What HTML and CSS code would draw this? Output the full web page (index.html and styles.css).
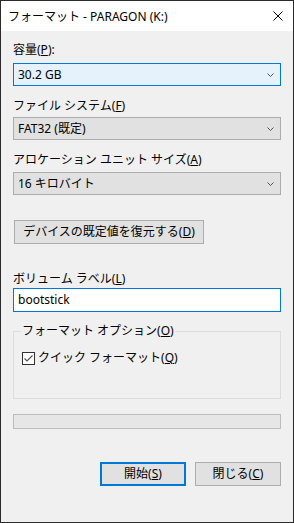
FILE: index.html
```html
<!DOCTYPE html>
<html lang="ja">
<head>
  <meta charset="UTF-8" />
  <title>フォーマット - PARAGON (K:)</title>
  <link rel="stylesheet" href="styles.css">
</head>
<body>
  <div class="window">
    <!-- Title bar -->
    <div class="titlebar">
      <span class="title">フォーマット - PARAGON (K:)</span>
      <svg class="close" width="10" height="10" viewBox="0 0 10 10">
        <path d="M0.5 0.5 L9.5 9.5 M9.5 0.5 L0.5 9.5" stroke="#000" stroke-width="1" fill="none" />
      </svg>
    </div>

    <div class="content">
      <div class="label l-capacity">容量(<u>P</u>):</div>
      <div class="combo focused c-capacity">
        <span>30.2 GB</span>
        <svg class="chev" width="7" height="4" viewBox="0 0 7 4"><path d="M0.5 0.5 L3.5 3.5 L6.5 0.5" stroke="#555" fill="none" /></svg>
      </div>

      <div class="label l-fs">ファイル システム(<u>F</u>)</div>
      <div class="combo c-fs">
        <span>FAT32 (既定)</span>
        <svg class="chev" width="7" height="4" viewBox="0 0 7 4"><path d="M0.5 0.5 L3.5 3.5 L6.5 0.5" stroke="#555" fill="none" /></svg>
      </div>

      <div class="label l-alloc">アロケーション ユニット サイズ(<u>A</u>)</div>
      <div class="combo c-alloc">
        <span>16 キロバイト</span>
        <svg class="chev" width="7" height="4" viewBox="0 0 7 4"><path d="M0.5 0.5 L3.5 3.5 L6.5 0.5" stroke="#555" fill="none" /></svg>
      </div>

      <button class="btn restore">デバイスの既定値を復元する(<u>D</u>)</button>

      <div class="label l-vol">ボリューム ラベル(<u>L</u>)</div>
      <div class="textbox">bootstick</div>

      <fieldset class="group">
        <legend>フォーマット オプション(<u>O</u>)</legend>
        <div class="check-row">
          <span class="checkbox">
            <svg width="11" height="11" viewBox="0 0 11 11"><path d="M1.5 5.5 L4 8 L9.5 2.5" stroke="#555" stroke-width="1.2" fill="none" /></svg>
          </span>
          <span>クイック フォーマット(<u>Q</u>)</span>
        </div>
      </fieldset>

      <div class="progress"></div>

      <div class="actions">
        <button class="btn default">開始(<u>S</u>)</button>
        <button class="btn">閉じる(<u>C</u>)</button>
      </div>
    </div>
  </div>
</body>
</html>
```

FILE: styles.css
```css
body {
  margin: 0;
  font-family: "Noto Sans", "Noto Sans CJK JP", sans-serif;
  font-size: 12px;
  color: #000;
  background: #f0f0f0;
}

u {
  text-decoration: underline;
  text-decoration-thickness: 1px;
  text-underline-offset: 1px;
}

.window {
  width: 294px;
  height: 523px;
  box-sizing: border-box;
  border: 1px solid #2b2b2b;
  background: #f0f0f0;
  display: flex;
  flex-direction: column;
}

.titlebar {
  height: 30px;
  background: #fff;
  display: flex;
  align-items: center;
  justify-content: space-between;
  padding: 0 10px 0 7px;
  flex-shrink: 0;
}

.title {
  line-height: 16px;
  margin-top: 1px;
}

.close {
  margin-top: -1px;
}

.content {
  padding: 0 12px;
  display: flex;
  flex-direction: column;
}

.label {
  line-height: 16px;
  height: 16px;
}

.l-capacity { margin-top: 11px; }
.l-fs { margin-top: 12px; }
.l-alloc { margin-top: 12px; }
.l-vol { margin-top: 27px; }

.combo {
  height: 23px;
  box-sizing: border-box;
  border: 1px solid #adadad;
  background: #e1e1e1;
  display: flex;
  align-items: center;
  justify-content: space-between;
  padding: 0 6px 0 4px;
  line-height: 16px;
}

.combo.focused {
  border-color: #0078d7;
  background: #e5f1fb;
}

.c-capacity { margin-top: 5px; }
.c-fs { margin-top: 3px; }
.c-alloc { margin-top: 4px; }

.btn {
  font: inherit;
  color: #000;
  height: 24px;
  box-sizing: border-box;
  border: 1px solid #adadad;
  background: #e1e1e1;
  padding: 0;
  line-height: 16px;
}

.restore {
  width: 190px;
  margin: 25px 0 0 1px;
}

.textbox {
  margin-top: 1px;
  height: 24px;
  box-sizing: border-box;
  border: 1px solid #0078d7;
  background: #fff;
  padding: 0 4px;
  line-height: 22px;
}

.group {
  margin: 11px 0 0;
  padding: 11px 0 0 8px;
  height: 76px;
  box-sizing: border-box;
  border: 1px solid #dcdcdc;
}

.group legend {
  padding: 0 1px;
  margin-left: -1px;
  line-height: 16px;
}

.check-row {
  display: flex;
  align-items: center;
  gap: 3px;
  line-height: 16px;
}

.checkbox {
  width: 13px;
  height: 13px;
  box-sizing: border-box;
  border: 1px solid #333;
  background: #fff;
  display: flex;
  align-items: center;
  justify-content: center;
}

.progress {
  margin-top: 15px;
  height: 15px;
  box-sizing: border-box;
  border: 1px solid #bcbcbc;
  background: #e6e6e6;
}

.actions {
  margin-top: 33px;
  display: flex;
  justify-content: flex-end;
  gap: 9px;
}

.actions .btn {
  width: 86px;
}

.btn.default {
  border: 2px solid #0078d7;
}
```
